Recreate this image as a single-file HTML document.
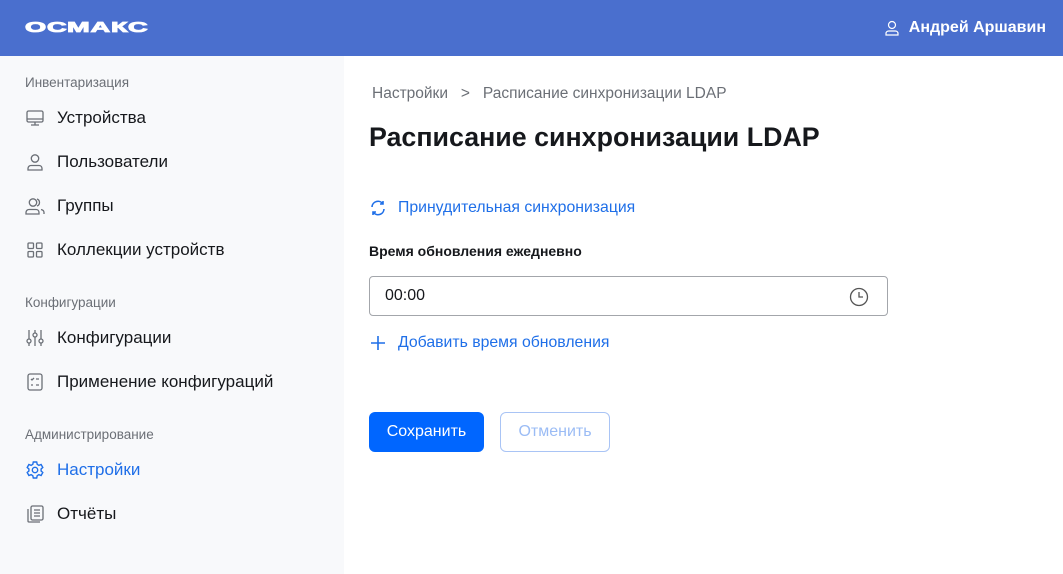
<!DOCTYPE html>
<html><head><meta charset="utf-8"><style>
*{margin:0;padding:0;box-sizing:border-box}
body{width:1063px;height:574px;overflow:hidden;font-family:"Liberation Sans",sans-serif;background:#fff;position:relative}
.hdr{position:absolute;left:0;top:0;width:1063px;height:56px;background:#4a6fce}
.logo{position:absolute;left:25px;top:19px;color:#fff;font-weight:900;font-size:17px;letter-spacing:0.5px;transform:scaleX(1.6) scaleY(0.85);transform-origin:left top;-webkit-text-stroke:1px #fff}
.user{position:absolute;right:17px;top:19px;color:#fff;font-weight:bold;font-size:16px;display:flex;align-items:center;gap:10px}
.side{position:absolute;left:0;top:56px;width:344px;height:518px;background:#f8f9fb}
.sec{position:absolute;left:25px;font-size:13.5px;color:#6b6f76}
.it{position:absolute;left:25px;font-size:17px;color:#16181c;display:flex;align-items:center}
.it svg{width:20px;height:20px;margin-right:12px}
.a{position:absolute}
</style></head><body>
<div class="hdr"><div class="logo">ОСМАКС</div>
<div class="user"><svg width="14" height="16" viewBox="0 0 14 16" fill="none" stroke="#fff" stroke-width="1.2"><circle cx="7" cy="5" r="3.5"/><path d="M1 15v-1.5c0-1.5 1.2-2.5 2.7-2.5h6.6c1.5 0 2.7 1 2.7 2.5V15z"/></svg>Андрей Аршавин</div></div>
<div class="side">
<div class="sec" style="top:19px">Инвентаризация</div>
<div class="it" style="top:52px"><svg viewBox="0 0 20 20" fill="none" stroke="#6b6f76" stroke-width="1.3"><rect x="2" y="3" width="16" height="11" rx="1.5"/><path d="M2 11h16M10 14v3M6 17h8"/></svg>Устройства</div>
<div class="it" style="top:96px"><svg viewBox="0 0 20 20" fill="none" stroke="#6b6f76" stroke-width="1.3"><circle cx="10" cy="6.5" r="3.7"/><path d="M3 18v-1.5c0-1.7 1.3-3 3-3h8c1.7 0 3 1.3 3 3V18z"/></svg>Пользователи</div>
<div class="it" style="top:140px"><svg viewBox="0 0 20 20" fill="none" stroke="#6b6f76" stroke-width="1.3"><circle cx="8" cy="6.5" r="3.7"/><path d="M1 18v-1.5c0-1.7 1.3-3 3-3h7c1.7 0 3 1.3 3 3V18zM12 3a3.7 3.7 0 0 1 0 7M16 13.5c1.5.3 3 1.3 3 3V18"/></svg>Группы</div>
<div class="it" style="top:184px"><svg viewBox="0 0 20 20" fill="none" stroke="#6b6f76" stroke-width="1.3"><rect x="3" y="3" width="5.5" height="5.5" rx="1"/><rect x="11.5" y="3" width="5.5" height="5.5" rx="1"/><rect x="3" y="11.5" width="5.5" height="5.5" rx="1"/><rect x="11.5" y="11.5" width="5.5" height="5.5" rx="1"/></svg>Коллекции устройств</div>
<div class="sec" style="top:239px">Конфигурации</div>
<div class="it" style="top:272px"><svg viewBox="0 0 20 20" fill="none" stroke="#6b6f76" stroke-width="1.3"><path d="M4 2v9M4 15v3M10 2v3M10 9v9M16 2v9M16 15v3"/><circle cx="4" cy="13" r="2"/><circle cx="10" cy="7" r="2"/><circle cx="16" cy="13" r="2"/></svg>Конфигурации</div>
<div class="it" style="top:316px"><svg viewBox="0 0 20 20" fill="none" stroke="#6b6f76" stroke-width="1.3"><rect x="3" y="2" width="14" height="16" rx="2"/><path d="M6 7l1 1 2-2M11 7h3M6 13h2M11 13h3"/></svg>Применение конфигураций</div>
<div class="sec" style="top:371px">Администрирование</div>
<div class="it" style="top:404px;color:#1f6fe8"><svg viewBox="0 0 20 20" fill="none" stroke="#1f6fe8" stroke-width="1.4"><path d="M8.3 2h3.4l.5 2.3 1.7 1 2.2-.8 1.7 3-1.7 1.5v2l1.7 1.5-1.7 3-2.2-.8-1.7 1-.5 2.3H8.3l-.5-2.3-1.7-1-2.2.8-1.7-3L3.9 11V9L2.2 7.5l1.7-3 2.2.8 1.7-1z"/><circle cx="10" cy="10" r="2.7"/></svg>Настройки</div>
<div class="it" style="top:448px"><svg viewBox="0 0 20 20" fill="none" stroke="#6b6f76" stroke-width="1.3"><rect x="6" y="2" width="12" height="14" rx="1.5"/><path d="M3 5v12c0 .6.4 1 1 1h11M9 6h6M9 9h6M9 12h6"/></svg>Отчёты</div>
</div>
<div class="a" style="left:372px;top:85px;font-size:15.5px;color:#6b6f76">Настройки &nbsp;&nbsp;&gt;&nbsp;&nbsp; Расписание синхронизации LDAP</div>
<div class="a" style="left:369px;top:122px;font-size:26.8px;font-weight:bold;color:#16181c">Расписание синхронизации LDAP</div>
<div class="a" style="left:369px;top:199px;font-size:15.8px;color:#1f6fe8;display:flex;align-items:center"><svg width="18" height="18" viewBox="0 0 18 18" fill="none" stroke="#1f6fe8" stroke-width="1.6"><path d="M3 8a6 6 0 0 1 11-3M15 10a6 6 0 0 1-11 3M14 2v3h-3M4 16v-3h3"/></svg><span style="margin-left:11px">Принудительная синхронизация</span></div>
<div class="a" style="left:369px;top:243px;font-size:14px;font-weight:bold;color:#16181c">Время обновления ежедневно</div>
<div class="a" style="left:369px;top:276px;width:519px;height:40px;border:1px solid #a3a6ab;border-radius:4px;font-size:16px;color:#16181c;padding:10px 0 0 15px">00:00
<svg style="position:absolute;right:18px;top:10px" width="20" height="20" viewBox="0 0 20 20" fill="none" stroke="#555" stroke-width="1.3"><circle cx="10" cy="10" r="8.5"/><path d="M10 5v5h4"/></svg></div>
<div class="a" style="left:369px;top:334px;font-size:15.8px;color:#1f6fe8;display:flex;align-items:center"><svg width="18" height="18" viewBox="0 0 18 18" stroke="#1f6fe8" stroke-width="1.6"><path d="M9 2v14M2 9h14"/></svg><span style="margin-left:11px">Добавить время обновления</span></div>
<div class="a" style="left:369px;top:412px;width:115px;height:40px;background:#0066ff;border-radius:6px;color:#fff;font-size:16px;text-align:center;line-height:40px">Сохранить</div>
<div class="a" style="left:500px;top:412px;width:110px;height:40px;border:1px solid #a9c4f5;border-radius:6px;color:#9bbcf5;font-size:16px;text-align:center;line-height:38px">Отменить</div>
</body></html>
